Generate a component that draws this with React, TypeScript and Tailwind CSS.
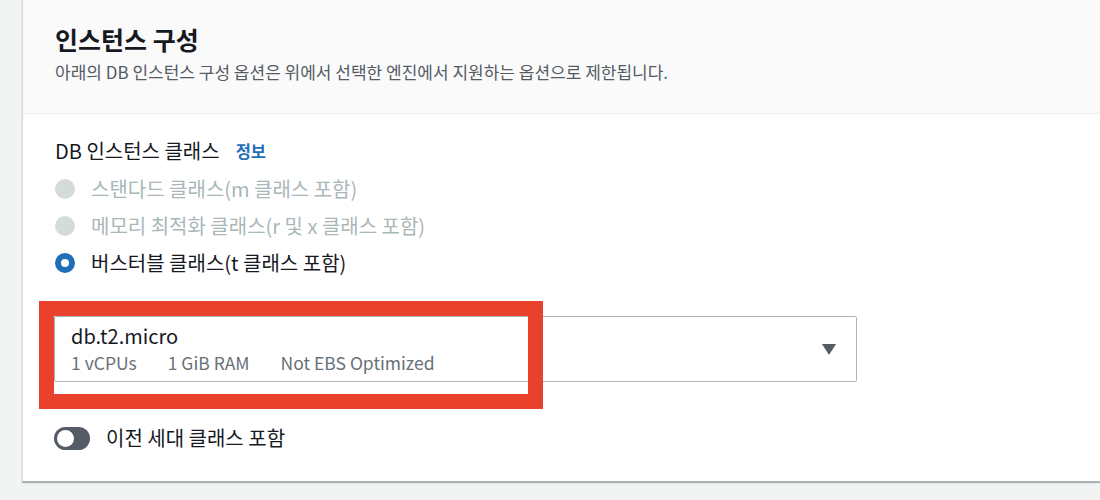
const font = { fontFamily: '"Noto Sans CJK KR", "Noto Sans", sans-serif' };

function Radio({ label, checked, disabled }: { label: string; checked?: boolean; disabled?: boolean }) {
  return (
    <div className="flex h-[37px] items-center">
      {checked ? (
        <span className="ml-px h-[20px] w-[20px] rounded-full border-[6px] border-[#1f6fb8] bg-white" />
      ) : (
        <span className="ml-px h-[20px] w-[20px] rounded-full bg-[#d5dbdb]" />
      )}
      <span className={"ml-[16px] text-[20px] " + (disabled ? "text-[#aab7b8]" : "text-[#16191f]")}>{label}</span>
    </div>
  );
}

export default function App() {
  return (
    <div className="flex h-[500px] w-[1100px] overflow-hidden bg-[#f2f3f3] pl-[22px]" style={font}>
      <div className="h-[482px] flex-1 border-b border-l border-b-[#aab7b8] border-l-[#d5dbdb] bg-white shadow-[0_1px_1px_rgba(0,28,36,0.3)]">
        <div className="h-[114px] border-b border-[#eaeded] bg-[#fafafa] px-[32px] pt-[22px]">
          <h2 className="text-[25px] font-bold leading-[34px] text-[#16191f]">인스턴스 구성</h2>
          <p className="mt-[4px] text-[17px] leading-[24px] text-[#545b64]">
            아래의 DB 인스턴스 구성 옵션은 위에서 선택한 엔진에서 지원하는 옵션으로 제한됩니다.
          </p>
        </div>
        <div className="px-[31px] pt-[25px]">
          <div className="ml-px flex h-[24px] items-center">
            <span className="text-[20px] text-[#16191f]">DB 인스턴스 클래스</span>
            <span className="ml-[16px] text-[16.5px] font-bold text-[#1f6fb8]">정보</span>
          </div>
          <div className="mt-[7px]">
            <Radio label="스탠다드 클래스(m 클래스 포함)" disabled />
            <Radio label="메모리 최적화 클래스(r 및 x 클래스 포함)" disabled />
            <Radio label="버스터블 클래스(t 클래스 포함)" checked />
          </div>
          <div className="relative mt-[35px] w-[803px]">
            <div className="flex h-[66px] items-center justify-between rounded-[2px] border border-[#aab7b8] bg-white pl-[16px] pr-[19px]">
              <div>
                <div className="text-[20px] leading-[25px] text-[#16191f]">db.t2.micro</div>
                <div className="mt-[2px] flex gap-[31px] text-[17.5px] leading-[25px] text-[#687078]">
                  <span>1 vCPUs</span>
                  <span>1 GiB RAM</span>
                  <span>Not EBS Optimized</span>
                </div>
              </div>
              <svg width="16" height="12" viewBox="0 0 16 12">
                <path d="M1 1 L15 1 L8.6 11 Q8 11.8 7.4 11 Z" fill="#545b64" />
              </svg>
            </div>
            <div className="pointer-events-none absolute left-[-15px] top-[-15px] h-[108px] w-[504px] border-[15px] border-[#e9412b]" />
          </div>
          <div className="mt-[41px] flex items-center">
            <span className="flex h-[23px] w-[36px] items-center rounded-full bg-[#545b64] px-[3px]">
              <span className="h-[17px] w-[17px] rounded-full bg-white" />
            </span>
            <span className="ml-[16px] text-[20px] text-[#16191f]">이전 세대 클래스 포함</span>
          </div>
        </div>
      </div>
    </div>
  );
}
